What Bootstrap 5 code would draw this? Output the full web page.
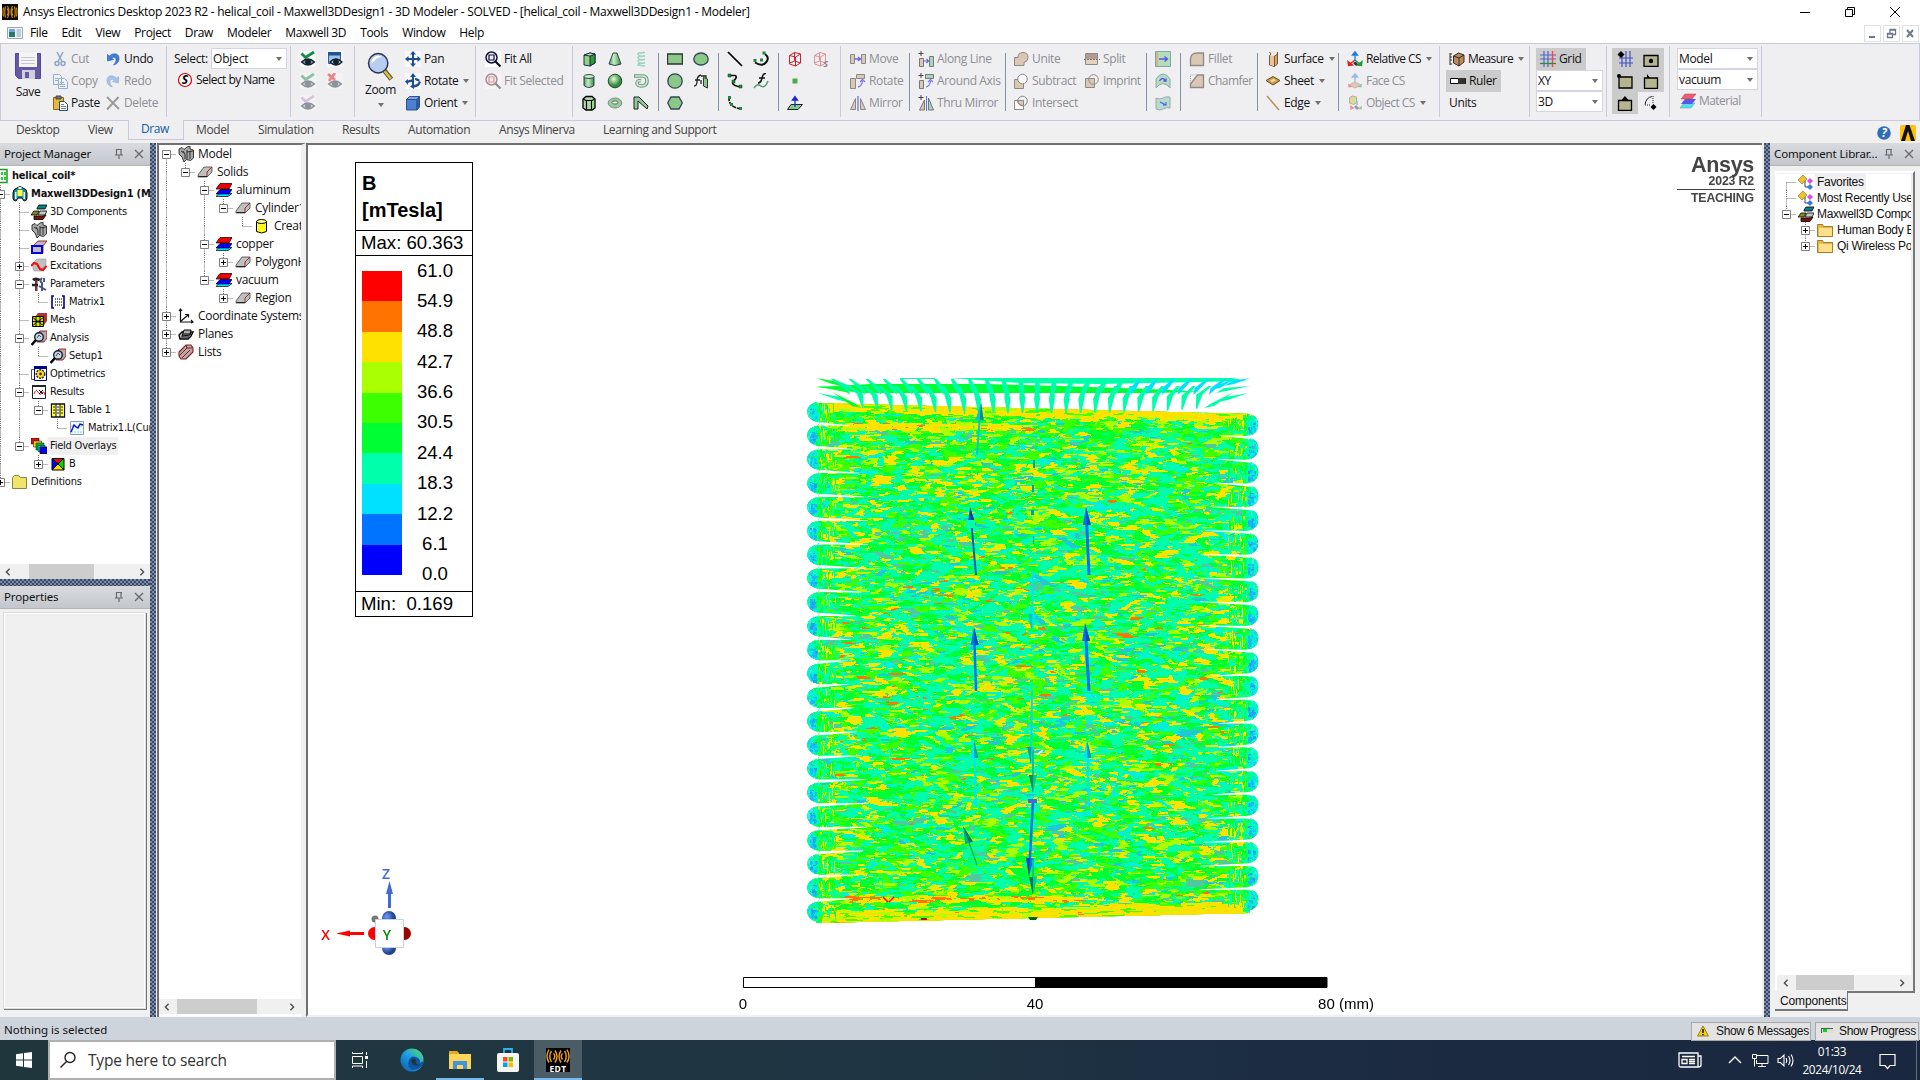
<!DOCTYPE html>
<html lang="en">
<head>
<meta charset="utf-8">
<title>Ansys Electronics Desktop 2023 R2</title>
<link href="https://cdn.jsdelivr.net/npm/bootstrap@5.3.0/dist/css/bootstrap.min.css" rel="stylesheet">
<style>
:root{--seg:"Open Sans","Noto Sans",sans-serif}
html,body{width:1920px;height:1080px;overflow:hidden}
body{font:12px/16px var(--seg);letter-spacing:-.36px;color:#111;background:#f0f0f0;white-space:nowrap}
svg{display:block;flex:none}
.ic{width:16px;height:16px}
.titlebar{height:23px;padding:1px 0 0 2px;background:#fff}
.titlebar .cap{padding-left:5px;color:#000;letter-spacing:-.255px}
.winbtns{gap:33px;padding-right:19px}
.menubar{height:20px;background:#fff;padding-left:7px;color:#000}
.menubar nav{gap:14px;padding-left:7px}
.mdi{gap:2px;padding-right:1px}
.mdi span{width:17px;height:17px;border:1px solid #e2e2e2}
.ribbon{height:78px;border:1px solid #c9c9de;background:#efeff2;padding:4px 0 0 7px;display:grid;grid-template-rows:72px;
 grid-template-columns:40px 53px 64px 3px 121px 3px 61px 3px 45px 73px 3px 94px 3px 83px 3px 57px 3px 57px 3px 59px 3px 66px 3px 93px 3px 69px 69px 3px 31px 3px 74px 3px 78px 3px 98px 3px 87px 3px 74px 3px 60px 3px 89px 3px}
.ribbon>*{min-width:0}
.sepL{width:1.5px;height:71px;margin:-2px auto 0;background:#c9c9dc}
.sepS{width:1px;height:58px;margin:5px auto 0;background:#8593aa}
.o2{padding-left:2px}.o3{padding-left:3px}.o4{padding-left:4px}.o5{padding-left:5px}.o6{padding-left:6px}
.rb{height:22px;display:flex;align-items:center}
.rb>i,.cell>i{width:23px;display:flex;justify-content:center;flex:none}
.tight{letter-spacing:-.55px}
.snug>i{width:22px}
.off{color:#8e8e94}
.faint{opacity:.45}
.cell{display:flex;align-items:center;height:22px}
.cell>i{width:26px}
.w27>.cell>i{width:27px}
.dd::after{content:"";border:3px solid transparent;border-top:4px solid #707070;border-bottom:0;margin-left:5px;width:0;height:0}
.ddz{width:0;height:0;border:3px solid transparent;border-top:4px solid #707070;border-bottom:0;margin-top:5px}
.hl{background:#cbcbcb}
.combo{height:21px;background:#fff;border:1px solid #d5d5e2;display:flex;align-items:center;justify-content:space-between;padding:0 4px 0 1px}
.combo::after{content:"";border:3px solid transparent;border-top:4px solid #707070;border-bottom:0}
.g2{margin-right:2px}
.tabs{height:22px;color:#444;display:grid;grid-template-columns:72px 41px 67px 62px 84px 66px 91px 104px 1fr auto;padding-left:16px;letter-spacing:-.4px}
.tabs>span{height:18px;line-height:18px}
.tabs .act{margin:-1px 12px 0 -1px;height:20px;padding-left:12px;background:#efeff2;border:1px solid #c9c9de;border-top:0;color:#0e5fa8}
.main{height:874px}
.phead{height:23px;flex:none;background:linear-gradient(#d9dbdf,#c3c7cc);border-bottom:1px solid #b4b4b4;padding:0 5px 0 4px;font:11.5px/22px "Noto Sans",sans-serif;letter-spacing:-.14px}
.vs{width:6px;flex:none;background-color:#8a8a88;background-image:radial-gradient(circle at 1px 1px,#2b4a86 1px,transparent 1.3px),radial-gradient(circle at 1px 1px,#2b4a86 1px,transparent 1.3px);background-size:4px 4px;background-position:0 0,2px 2px}
.hs{width:auto;height:7px}
.tree{overflow:hidden}
.tr0{display:flex;height:18px;align-items:center}
.t16 .tr0{height:16px}
.tc{width:19px;height:100%;flex:none}
.tc.icn{display:flex;align-items:center;justify-content:center}
.tl{padding:0 2px;line-height:18px}
.t16 .tl{line-height:16px}
.sel{background:#f0f0f0}
.tah{font:11px/18px "DejaVu Sans Condensed","DejaVu Sans",sans-serif;font-stretch:condensed;letter-spacing:-.22px}
.msf{font:12px/16px "Liberation Sans",sans-serif;letter-spacing:-.3px}
.sbar{height:15px;flex:none;background:#f0f0f0;display:flex;align-items:center;justify-content:space-between;padding:0 5px}
.thumb{height:15px;background:#cdcdcd}
.propbox{margin:4px 5px 9px 4px;border:1px solid #fff;outline:1px solid #dcdcdc;box-shadow:1px 1px 0 1px #777}
.sunk{border-left:2px solid #707070;border-top:2px solid #707070;background:#fff}
.view3d{width:1456px;flex:none;overflow:hidden;border-bottom:2px solid #f0f0f0}
.legend{position:absolute;left:47px;top:17px;width:118px;height:455px;border:1px solid #000;background:#fff;font:18.6px/24px "Liberation Sans",sans-serif;letter-spacing:0;color:#000}
.legend .hd{height:67px;padding:7px 6px;font-weight:bold;font-size:20px;line-height:27px}
.legend .rw{border-top:1px solid #000;height:25px;line-height:23px;padding-left:5px;white-space:pre}
.legend .mid{border-top:1px solid #000;height:336px;padding:15px 0 0 6px}
.legend .bar div{width:40px;height:30.4px}
.legend .num{width:66px;margin-top:-12.5px}
.legend .num div{height:30.4px;text-align:center}
.brand{position:absolute;right:7px;top:6px;width:78px;font:bold 12.3px/13px "Liberation Sans",sans-serif;letter-spacing:-.15px;color:#444;text-align:right}
.brand .big{font:600 21.5px/28px "Liberation Sans",sans-serif;letter-spacing:-.3px}
.brand .ln{border-bottom:1px solid #444;margin-bottom:2px;line-height:14px;padding-bottom:1px;margin-top:-5px}
.brand div{padding-right:1px}
.statusbar{height:23px;background:#cdd4dc;font:11.5px/25px "Noto Sans",sans-serif;letter-spacing:0;padding:1px 0 0 4px}
.sbtn{height:19px;border:1px solid #a9a9a9;background:#e3e3e3;font:12px/17px "Liberation Sans",sans-serif;letter-spacing:-.35px}
.task{height:40px;background:linear-gradient(90deg,#20363d,#1f3543 45%,#1b2a41 75%,#1a2740);color:#fff}
.search{width:288px;background:#fff;border:2px solid #b0b0b0;color:#333;font-size:15.5px;letter-spacing:-.2px}
.tb{width:48px;height:40px;display:flex;align-items:center;justify-content:center}
.run{box-shadow:inset 0 -2px #76b9ed}
.clock{font-size:11.8px;line-height:18px;text-align:center;width:68px}
#selobj{width:76px;margin-right:2px;letter-spacing:-.2px}
#left,#right{width:150px;flex:none}#projTree{height:398px;padding-top:1px}#projTree .tr0{margin-left:-9px}
#sb1{padding:0 4px}#sb1 .thumb{width:65px;margin-right:28px}
#mid{width:149px;flex:none;border-right:5px solid #f0f0f0;margin-left:1px}#sb2{padding-left:4px}#sb2 .thumb{width:80px;margin-right:26px}#mid .sbar{margin-bottom:3px}#modTree .tr0{margin-left:-2px}#modTree .tl{padding-left:3px;letter-spacing:-.3px}
#vs2{margin-left:2px}
#libbox{margin:5px 5px 0 5px;height:822px;border:2px solid #fff;border-right:2px solid #777;border-bottom:2px solid #777;padding:1px 2px 1px 0;background:#f0f0f0}
#libTree .tr0:nth-child(n+4) .tl{padding-left:3px}
#sb3 .thumb{width:58px;margin-right:38px}
#comptab{width:73px;margin:-2px 0 0 5px;height:20px;background:#f0f0f0;border:solid #777;border-width:0 1px 2px 0;padding-left:5px;line-height:20px;position:relative;letter-spacing:-.15px}
#msg{width:120px;padding-left:3px;margin-right:4px}#msg span{padding-left:5px}
#prg{width:104px;margin-right:1px;padding-left:2px}#prg span{padding-left:5px}
#edt{background:#4a5c66;margin-left:2px}
#tray svg:nth-child(1){margin-right:26px}#tray svg:nth-child(2){margin-right:10px}#tray svg:nth-child(3){margin-right:8px}#tray svg:nth-child(4){margin-right:4px}
#tray>svg:nth-child(6){margin:2px 20px 0 13px}#peek{width:4px;height:40px;border-left:1px solid #66707f}
</style>
<script src="https://cdn.jsdelivr.net/npm/bootstrap@5.3.0/dist/js/bootstrap.bundle.min.js"></script>
</head>
<body>
<svg width="0" height="0" class="position-absolute">
<defs>
<linearGradient id="gg" x1="0" x2="1"><stop offset="0" stop-color="#4f9a55"/><stop offset=".4" stop-color="#c8efc4"/><stop offset="1" stop-color="#3a8a44"/></linearGradient>
<radialGradient id="gs" cx=".4" cy=".35"><stop offset="0" stop-color="#e4fbe0"/><stop offset="1" stop-color="#2f8a3a"/></radialGradient>
<radialGradient id="gb" cx=".35" cy=".4"><stop offset="0" stop-color="#6f9cf8"/><stop offset="1" stop-color="#22408c"/></radialGradient>
<linearGradient id="ed" x1="0" y1="1" x2="1" y2="0"><stop offset="0" stop-color="#0c59a4"/><stop offset=".5" stop-color="#1b9de2"/><stop offset="1" stop-color="#5fe06a"/></linearGradient>
</defs>
<symbol id="i-edt" viewBox="0 0 16 16"><path fill="#0b0703" d="M0 0h16v16H0z"/><g fill="none" stroke="#c98a1c" stroke-width="1.200"><path d="M5 4.500q2.500 3.500 0 7M3.500 2.500q-1.500 5.500 0 11M1.500 3.500q-1 4.500 0 9M11 4.500q-2.500 3.500 0 7M12.500 2.500q1.500 5.500 0 11M14.500 3.500q1 4.500 0 9M5.500 2q3 6 0 12M10.500 2q-3 6 0 12"/></g></symbol>
<symbol id="i-doc" viewBox="0 0 16 16"><path fill="#f4f6f8" stroke="#9aa" d="M.5 2.500h15v11H.5z"/><path fill="#2a7a6a" d="M2 4h6v8H2z"/><path fill="#6fa8d8" d="M2 4h6v3H2z"/><path fill="#bcd" d="M9.500 4h4.500v8H9.500z"/></symbol>
<symbol id="i-save" viewBox="0 0 28 28"><path fill="#6558a5" stroke="#544892" d="M1.500 1.500h25v25h-22l-3-3z"/><path fill="#f5f5f8" d="M5 1h18v14H5z"/><path stroke="#c7c7d2" d="M7 5.500h14M7 8.500h14M7 11.500h14"/><path fill="#cfd0da" d="M8 18h13v9H8z"/><path fill="#6558a5" d="M11 20h4v6h-4z"/></symbol>
<symbol id="i-cut" viewBox="0 0 16 16"><g fill="none" stroke="#8fa5c4" stroke-width="1.500"><path d="M5 1l5 9.500M11 1l-5 9.500"/><circle cx="5" cy="12.500" r="2"/><circle cx="11" cy="12.500" r="2"/></g></symbol>
<symbol id="i-copy" viewBox="0 0 16 16"><g fill="#eef3fa" stroke="#98add0"><path d="M1.500 1.500h6l2 2v8h-8zM6.500 5.500h6l3 3v7h-9z"/><path d="M3 5.500h3M3 7.500h3M8 9.500h4M8 11.500h5M8 13.500h5"/></g></symbol>
<symbol id="i-paste" viewBox="0 0 16 16"><path fill="#e6b83c" stroke="#8a6414" d="M1.500 2.500h10v12h-10z"/><path fill="#777" stroke="#444" d="M4 1h5v3H4z"/><path fill="#fff" stroke="#27476e" d="M7.500 6.500h5l3 3v6h-8z"/><path stroke="#5c7fb0" d="M9 9.500h3M9 11.500h5M9 13.500h5"/></symbol>
<symbol id="i-undo" viewBox="0 0 16 16"><path fill="#3f7fd8" stroke="#2156a8" stroke-width=".6" d="M2.500 3.500L2.500 10l6-1.500-2-1.500c2.500-1.600 4.800-.5 4.500 2.500-.3 2-1.500 3.500-2.500 4.500 4-1 6-4 5.500-7.500C13.300 2.300 8.500 1.500 4.500 5z"/></symbol>
<symbol id="i-redo" viewBox="0 0 16 16"><path fill="#a9c1e6" stroke="#8da9d4" stroke-width=".6" d="M13.500 3.500V10l-6-1.500 2-1.500c-2.500-1.600-4.800-.5-4.500 2.500.3 2 1.500 3.500 2.500 4.500-4-1-6-4-5.500-7.500C2.700 2.300 7.500 1.500 11.500 5z"/></symbol>
<symbol id="i-del" viewBox="0 0 16 16"><path d="M2 2l12 12M13.500 2L2 14.500" stroke="#9a9a9a" stroke-width="1.900" fill="none"/></symbol>
<symbol id="i-eye" viewBox="0 0 16 16"><path fill="#f8f8f8" d="M0 0h16v16H0z"/><path fill="none" stroke="#138a4a" stroke-width="2.800" d="M1.500 2.500l4 4 8.500-5.500"/><path fill="#8a9c98" stroke="#123" stroke-width="1.300" d="M1.500 11q6.500-6 13 0q-6.500 6-13 0z"/><circle cx="8" cy="11" r="3" fill="#123"/></symbol>
<symbol id="i-eyep" viewBox="0 0 16 16"><path fill="#f8f8f8" d="M0 0h16v16H0z"/><path fill="none" stroke="#b68cc8" stroke-width="2.600" d="M1.500 2.500l4 4 8.500-5.500"/><path fill="#a0a8a8" stroke="#123" stroke-width="1.300" d="M1.500 11q6.500-6 13 0q-6.500 6-13 0z"/><circle cx="8" cy="11" r="3" fill="#123"/></symbol>
<symbol id="i-eyex" viewBox="0 0 16 16"><path fill="#f8f8f8" d="M0 0h16v16H0z"/><path fill="none" stroke="#e00" stroke-width="2.800" d="M1 1l7 6M8 0L2 8"/><path fill="#a0a8a8" stroke="#123" stroke-width="1.300" d="M1.500 11q6.500-6 13 0q-6.500 6-13 0z"/><circle cx="8" cy="11" r="3" fill="#123"/></symbol>
<symbol id="i-eyew" viewBox="0 0 16 16"><path fill="#f8f8f8" d="M0 0h16v16H0z"/><path fill="#a4bfe2" stroke="#2b64a5" d="M1.500 1.500h12v11h-12z"/><path fill="#1f5492" d="M1 1h13v3.500H1z"/><path fill="#b9c4c4" stroke="#123" stroke-width="1.300" d="M3 11q6-6 12 0q-6 6-12 0z"/><circle cx="9" cy="11" r="2.900" fill="#123"/></symbol>
<symbol id="i-s" viewBox="0 0 16 16"><circle cx="8" cy="8" r="6.500" fill="#fff" stroke="#d00" stroke-width="1.200"/><text x="8" y="12.300" font-size="12" font-weight="bold" text-anchor="middle" fill="#000" letter-spacing="0">S</text></symbol>
<symbol id="i-zoom" viewBox="0 0 30 32"><path d="M18 19l8 10" stroke="#6a5a20" stroke-width="5"/><path d="M18.500 20l7 8.500" stroke="#d9c25c" stroke-width="2.600"/><circle cx="12" cy="12" r="10.300" fill="#b9cdf2" stroke="#2c3350" stroke-width="1.600"/><path d="M5 9q4-7 11-4q-7 1-11 8z" fill="#fff"/></symbol>
<symbol id="i-pan" viewBox="0 0 16 16"><path fill="#f8f8f8" d="M0 0h16v16H0z"/><path fill="#1d4f91" d="M8 0l3 3.500H9V7h3.500V5L16 8l-3.500 3V9H9v3.500h2L8 16l-3-3.500h2V9H3.500v2L0 8l3.500-3v2H7V3.500H5z"/></symbol>
<symbol id="i-rot" viewBox="0 0 16 16"><path fill="#f8f8f8" d="M0 0h16v16H0z"/><path fill="#1d4f91" d="M8 0l3 4H9v8q4-.5 5-4l2 1q-1.500 5-7 5.500V16l-4-2.500L7 12V9q-3 0-4 1v2L0 8.500 3 6v1.500q2-1 4-1V4H5zM10 5q3 0 5 2l-1.500 1.500L10 7z"/></symbol>
<symbol id="i-cube" viewBox="0 0 16 16"><path fill="#4f7fd0" stroke="#2d4f8a" d="M1.500 4.500h10.500v10.500h-10.500z"/><path fill="#7da5e6" stroke="#2d4f8a" d="M1.500 4.500l3-3h10l-2.500 3z"/><path fill="#2f5fb0" stroke="#2d4f8a" d="M12 4.500l2.500-3v10.500l-2.500 3z"/></symbol>
<symbol id="i-fit" viewBox="0 0 16 16"><path fill="#fff" d="M0 0h16v16H0z"/><circle cx="6.500" cy="6.500" r="5.500" fill="#eef" stroke="#113" stroke-width="1.500"/><path fill="none" stroke="#113" stroke-width="1.200" d="M4 4h5v5H4z"/><path d="M10.500 10.500l5 5" stroke="#111" stroke-width="2.200"/></symbol>
<symbol id="i-fitr" viewBox="0 0 16 16"><path fill="#fff" d="M0 0h16v16H0z"/><circle cx="6.500" cy="6.500" r="5.500" fill="#fee" stroke="#513" stroke-width="1.500"/><path fill="none" stroke="#c22" stroke-width="1.200" d="M4 4h5v5H4z"/><path d="M10.500 10.500l5 5" stroke="#111" stroke-width="2.200"/></symbol>
<symbol id="i-box" viewBox="0 0 16 16"><path fill="#8fd08a" stroke="#123" stroke-width=".9" d="M3 4l6-2 5 1v9l-5 3-6-1z"/><path fill="#2f9a3a" stroke="#123" stroke-width=".9" d="M9 5l5-2v9l-5 3z"/><path fill="#c4efbd" stroke="#123" stroke-width=".9" d="M3 4l6-2 5 1-5 2z"/></symbol>
<symbol id="i-frus" viewBox="0 0 16 16"><path fill="url(#gg)" stroke="#234" stroke-width=".9" d="M6 2h4l4 11q-6 3-12 0z"/></symbol>
<symbol id="i-helix" viewBox="0 0 16 16"><g fill="none" stroke="#9ed3bb" stroke-width="1.400"><path d="M12 1.500q-8 0-7 2t7 1.500q-8 0-7 2t7 1.500q-8 0-7 2t7 1.500q-8 0-7 2l7 1"/></g></symbol>
<symbol id="i-cyl" viewBox="0 0 16 16"><path fill="url(#gg)" stroke="#234" stroke-width=".9" d="M3 3.500v9q5 4 10 0v-9"/><ellipse cx="8" cy="3.500" rx="5" ry="2" fill="#c4efbd" stroke="#234" stroke-width=".9"/></symbol>
<symbol id="i-sph" viewBox="0 0 16 16"><circle cx="8" cy="8" r="6.800" fill="url(#gs)" stroke="#254d2b"/></symbol>
<symbol id="i-spiral" viewBox="0 0 16 16"><path fill="none" stroke="#6f9a80" stroke-width="3.600" d="M1 3h9q4 .5 4 5t-5 5q-5 0-5-3t4-2"/><path fill="none" stroke="#cfe6d6" stroke-width="1.600" d="M2 3h8q4 .5 4 5t-5 5q-5 0-5-3t4-2"/></symbol>
<symbol id="i-poly" viewBox="0 0 16 16"><path fill="#a8dba0" stroke="#000" stroke-width="1.300" d="M2 4l3-2.500h6L14 4v9l-3 2H5l-3-2z"/><path d="M2 4l3 1.500h6L14 4M5.500 5.500v9M10.500 5.500v9" fill="none" stroke="#000" stroke-width="1.100"/></symbol>
<symbol id="i-torus" viewBox="0 0 16 16"><ellipse cx="8" cy="8" rx="6.800" ry="5" fill="#9cc9a2" stroke="#6a9a72"/><ellipse cx="8" cy="7.500" rx="3" ry="1.600" fill="#efeff2" stroke="#547a5a"/></symbol>
<symbol id="i-bend" viewBox="0 0 16 16"><path fill="#8fc898" stroke="#222" d="M1 2h5l9 9-1 3-9-8v8H1z"/></symbol>
<symbol id="i-rect" viewBox="0 0 16 16"><path fill="#8bc88a" stroke="#333" stroke-width="1.300" d="M.5 3h15v10H.5z"/></symbol>
<symbol id="i-ell" viewBox="0 0 16 16"><ellipse cx="8" cy="8" rx="7.200" ry="6" fill="#8bc88a" stroke="#345" stroke-width="1.300"/></symbol>
<symbol id="i-circ" viewBox="0 0 16 16"><circle cx="8" cy="8" r="7.200" fill="#8bc88a" stroke="#345" stroke-width="1.300"/></symbol>
<symbol id="i-fsur" viewBox="0 0 16 16"><path fill="#8bc88a" stroke="#333" d="M10.500 4.500l4 1.500v9l-4-2z"/><path d="M1 13q3 0 3-5t4-6M2 7h5M8 7v4M8 3h5v2" fill="none" stroke="#222" stroke-width="1.300"/></symbol>
<symbol id="i-hex" viewBox="0 0 16 16"><path fill="#8bc88a" stroke="#345" stroke-width="1.300" d="M4 2h8l3.300 6-3.300 6H4L.7 8z"/></symbol>
<symbol id="i-line" viewBox="0 0 16 16"><path d="M1 1l14 14" stroke="#000" stroke-width="1.700"/></symbol>
<symbol id="i-arc" viewBox="0 0 16 16"><path d="M12 3q5 4 1 8.500t-11 0" fill="none" stroke="#111" stroke-width="2"/><path fill="#1b8a3a" d="M.5 8h3v3h-3zM7 7.500h3v3H7zM9.500.5h3v3h-3z"/></symbol>
<symbol id="i-spl" viewBox="0 0 16 16"><path d="M2 2.500h6q3 1-1 5t4 6h4" fill="none" stroke="#111" stroke-width="1.700"/><path fill="#1b8a3a" stroke="#041" stroke-width=".5" d="M1 1h3v3H1zM5 7h3v3H5zM12 12h3v3h-3z"/></symbol>
<symbol id="i-feq" viewBox="0 0 16 16"><path d="M5 10q3 0 4-5t4-4.500M6 5h6" fill="none" stroke="#111" stroke-width="1.500"/><path d="M1 15q3-5 7-2t7-5" fill="none" stroke="#5b9a74" stroke-width="1.500"/></symbol>
<symbol id="i-arc2" viewBox="0 0 16 16"><path d="M2 2q-1 10 12 12" fill="none" stroke="#111" stroke-width="1.700" stroke-dasharray="4 1"/><path fill="#1b8a3a" d="M1 1h3v3H1zM3 8h3v3H3zM12 12h3v3h-3z"/></symbol>
<symbol id="i-wbox" viewBox="0 0 16 16"><path fill="none" stroke="#c8202c" d="M2.500 4.500l5-3 6 1.500v9l-5 3-6-2zM2.500 4.500l6 1.500 5-3M8.500 6v9M2.500 12l5-2 6 2M7.500 1.500v8"/></symbol>
<symbol id="i-wboxs" viewBox="0 0 16 16"><path fill="none" stroke="#c8202c" d="M1.500 4.500l5-3 6 1.500v9l-5 3-6-2zM1.500 4.500l6 1.500 5-3M7.500 6v9M1.500 12l5-2 6 2M6.500 1.500v8"/><text x="12.500" y="15.500" font-size="9" font-weight="bold" text-anchor="middle">S</text></symbol>
<symbol id="i-pt" viewBox="0 0 16 16"><path fill="#4cab46" d="M5.500 5.500h5v5h-5z"/></symbol>
<symbol id="i-plane" viewBox="0 0 16 16"><path fill="#7fd08a" stroke="#222" d="M4 9.500h11.500L11 14.500H.5z"/><path d="M8 12V3M5.500 5L8 1.500 10.500 5z" stroke="#22d" fill="#22d" stroke-width="1.300"/></symbol>
<symbol id="i-move" viewBox="0 0 16 16"><g fill="#dcc7b2" stroke="#8a8a8a"><path d="M.5 3.500h4v9h-4zM11.500 3.500h4v9h-4z"/></g><path d="M5 8h5M8 6l2.500 2L8 10" fill="none" stroke="#66e" stroke-width="1.300"/></symbol>
<symbol id="i-rott" viewBox="0 0 16 16"><g fill="#dcc7b2" stroke="#8a8a8a"><path d="M.5 5.500h5v10h-5zM6.500 1.500h8v4h-8z"/></g><path d="M8 14q4-1 4.500-6M10 9l2.500-2.500L15 9" fill="none" stroke="#77e" stroke-width="1.300"/></symbol>
<symbol id="i-mir" viewBox="0 0 16 16"><g fill="#dcc7b2" stroke="#8a8a8a"><path d="M5.500 3.500v11h-5zM10.500 3.500v11h5z"/></g><path d="M8 1v15" stroke="#66e" stroke-width="1.200"/></symbol>
<symbol id="i-al" viewBox="0 0 16 16"><path fill="#dcc7b2" stroke="#777" d="M1.500 7.500h4v8h-4z"/><path fill="#a4d8b6" stroke="#777" d="M11.500 5.500h4v10h-4z"/><path d="M3 0v5M.5 2.500h5" stroke="#444"/><path d="M6 10h4M8.500 8l2 2-2 2" fill="none" stroke="#66e" stroke-width="1.200"/></symbol>
<symbol id="i-aa" viewBox="0 0 16 16"><path fill="#dcc7b2" stroke="#777" d="M1.500 7.500h4v8h-4z"/><path fill="#a4d8b6" stroke="#777" d="M7.500 1.500h8v4h-8z"/><path d="M3 0v5M.5 2.500h5" stroke="#444"/><path d="M8 14q4-1 4.500-6M10 9l2.500-2.500L15 9" fill="none" stroke="#77e" stroke-width="1.200"/></symbol>
<symbol id="i-tm" viewBox="0 0 16 16"><path fill="#dcc7b2" stroke="#777" d="M6.500 5v10h-5z"/><path fill="#a4d8b6" stroke="#777" d="M10.500 3v12h5z"/><path d="M3 0v5M.5 2.500h5" stroke="#444"/><path d="M8.500 1v15" stroke="#66e"/></symbol>
<symbol id="i-uni" viewBox="0 0 16 16"><path fill="#dcc7b2" stroke="#8a8a8a" d="M1.500 14.500v-8h3.500q0-5 5-5t5 5q0 4-4 5v3z"/></symbol>
<symbol id="i-sub" viewBox="0 0 16 16"><path fill="#dcc7b2" stroke="#8a8a8a" d="M1.500 6.500h9v9h-9z"/><circle cx="9.500" cy="6" r="4.800" fill="#f8f8fa" stroke="#8a8a8a"/></symbol>
<symbol id="i-int" viewBox="0 0 16 16"><path fill="#f8f8fa" stroke="#8a8a8a" d="M1.500 5.500h9v9h-9z"/><circle cx="9.500" cy="6" r="4.800" fill="none" stroke="#8a8a8a"/><path fill="#dcc7b2" stroke="#8a8a8a" d="M5 5.500h5.500v5q-5 0-5.500-5z"/></symbol>
<symbol id="i-imp" viewBox="0 0 16 16"><path fill="#dcc7b2" stroke="#8a8a8a" d="M1.500 5.500h9v9h-9z"/><circle cx="9.500" cy="6.500" r="4.800" fill="none" stroke="#8a8a8a"/></symbol>
<symbol id="i-split" viewBox="0 0 16 16"><path fill="#b59a94" d="M2 3h11v5H2z"/><path fill="#e4d2bf" d="M2 8h11v5H2z"/><path fill="none" stroke="#8a8a8a" d="M1.500 2.500h12v11h-12z"/><path d="M0 8.500h16" stroke="#777" stroke-dasharray="2 1"/></symbol>
<symbol id="i-sw1" viewBox="0 0 16 16"><path fill="#b7dcb9" stroke="#7aa" d="M.5.5h15v15H.5z"/><path d="M2 1v14" stroke="#e9a080" stroke-width="1.500"/><path d="M4 8h8M9.500 5.500L12.500 8l-3 2.500" fill="none" stroke="#55e" stroke-width="1.300"/></symbol>
<symbol id="i-sw2" viewBox="0 0 16 16"><path fill="#b7dcb9" stroke="#8ab" d="M1 15V6q3-5 7-5t7 5v9l-3-3q-4-3-8 0z"/><path d="M4.500 8q3-5 6 0M8.500 8h2.500V5.500" fill="none" stroke="#55e" stroke-width="1.300"/></symbol>
<symbol id="i-sw3" viewBox="0 0 16 16"><path fill="#b7dcc9" stroke="#9ab" d="M1 3q4 2 7 0t7-1v11q-4-1-7 1t-7 0z"/><path d="M5 7l6 3M8 10h3V7" fill="none" stroke="#55e" stroke-width="1.100"/></symbol>
<symbol id="i-fil" viewBox="0 0 16 16"><path fill="#dcc7b2" stroke="#8a8a8a" stroke-width="1.300" d="M1.500 14.500V8q0-6 7-6h6v12.500z"/></symbol>
<symbol id="i-cha" viewBox="0 0 16 16"><path fill="#dcc7b2" stroke="#8a8a8a" stroke-width="1.300" d="M1.500 14.500V11l7-9h6v12.500z"/><path d="M1.500 10V2H8" fill="none" stroke="#aaa" stroke-dasharray="1 1"/></symbol>
<symbol id="i-surf" viewBox="0 0 16 16"><path fill="#d2a373" stroke="#7a5632" d="M4.500 1q3 2 0 3.500V14l5 1.500V5q4-1 3-4v12l-3 2.500"/><path fill="#e8c49a" d="M5 4l4 1v10l-4-1z"/></symbol>
<symbol id="i-sheet" viewBox="0 0 16 16"><path fill="#c99a4a" stroke="#6d4c18" d="M1 7.500l7-4 7 4-7 4.500z"/><path fill="#f0d690" d="M5 7.500l4-2 2 2-4 2z"/></symbol>
<symbol id="i-edge" viewBox="0 0 16 16"><path d="M2 1l12 14" stroke="#bd8f63" stroke-width="1.500"/></symbol>
<symbol id="i-cs" viewBox="0 0 16 16"><path d="M8 9V2M5.500 4L8 .8 10.500 4z" fill="#1a7fe0" stroke="#1a7fe0" stroke-width="1.300"/><path d="M8 9l-5 4M1 10.500l.5 4 4-.5z" stroke="#d22" fill="#d22" stroke-width="1.300"/><path d="M8 9l5 4M15 10.500l-.5 4-4-.5z" stroke="#1a9a3a" fill="#1a9a3a" stroke-width="1.300"/><path d="M6 12l2.500-1.500L11 13l-2 2z" fill="#333"/></symbol>
<symbol id="i-csf" viewBox="0 0 16 16"><path d="M8 9V2M5.500 4L8 .8 10.500 4z" fill="#1a7fe0" stroke="#1a7fe0" stroke-width="1.300"/><path d="M2 12l6-3 6 3-6 3z" fill="#c9a070" stroke="#a66"/><path d="M1 10.500l.5 4 4-.5z" fill="#d22"/><path d="M15 10.500l-.5 4-4-.5z" fill="#1a9a3a"/></symbol>
<symbol id="i-cso" viewBox="0 0 16 16"><path fill="#c8c030" stroke="#664" d="M2.500 2.500l3-1.500 4 1v6l-3 1.500-4-1.500z"/><path d="M10 10V6" stroke="#1a7fe0" stroke-width="1.500"/><path d="M3 10l.5 5 4-2z" fill="#d22"/><path d="M15 10.500l-.5 4-4-.5z" fill="#1a9a3a"/><path d="M7 12l2-2 3 3-2 2z" fill="#333"/></symbol>
<symbol id="i-meas" viewBox="0 0 16 16"><path d="M1 2v12M1 3h2M1 6h2M1 9h2M1 13h2" stroke="#333"/><path fill="#bb8a63" stroke="#3a2a1c" d="M4.500 5l5-3 5.500 2v7l-5 4-5.500-3z"/><path d="M4.500 5l5.500 2 5-3M10 7v8" fill="none" stroke="#3a2a1c"/></symbol>
<symbol id="i-ruler" viewBox="0 0 16 16"><path fill="#fff" stroke="#000" d="M.5 5.500h15v5H.5z"/><path d="M8 5h7.500v6H8z" fill="#333"/></symbol>
<symbol id="i-grid" viewBox="0 0 16 16"><g stroke="#5566c8" stroke-width="1.200"><path d="M4 0v16M8 0v16M0 4h16M0 8h16"/></g><path d="M12.500 0v16" stroke="#f44" stroke-width="1.500"/><path d="M0 12.500h16" stroke="#2a8a3a" stroke-width="1.300"/></symbol>
<symbol id="i-sn1" viewBox="0 0 16 16"><g stroke="#4455c0" stroke-width="1.200"><path d="M5 2v14M9 0v16M13 0v16M2 7h14M2 12h14"/></g><path d="M4 0l3.500 3.500L4 7 .5 3.500z"/></symbol>
<symbol id="i-sn2" viewBox="0 0 16 16"><path fill="#b5b48e" stroke="#000" stroke-width="1.300" d="M1 4.500h14v11H1z"/><circle cx="8" cy="10" r="2.200"/></symbol>
<symbol id="i-sn3" viewBox="0 0 16 16"><path fill="#b5b48e" stroke="#000" stroke-width="1.300" d="M2 4h13v11H2z"/><circle cx="2" cy="3" r="2"/></symbol>
<symbol id="i-sn4" viewBox="0 0 16 16"><path fill="#b5b48e" stroke="#000" stroke-width="1.300" d="M1.500 5h13v10.500h-13z"/><path d="M4 1l3 4H4z"/></symbol>
<symbol id="i-sn5" viewBox="0 0 16 16"><path fill="#b5b48e" stroke="#000" stroke-width="1.300" d="M1.500 5.500h13v10h-13z"/><path d="M4.500 5L8 1l3.500 4z"/></symbol>
<symbol id="i-sn6" viewBox="0 0 16 16"><path d="M9 1.500q-6 1-7 8" stroke="#222" fill="none"/><path d="M10 1v8M2 10h6" stroke="#222" fill="none" stroke-dasharray="1 1"/><path d="M10.500 9l3 3-3 3-3-3z"/></symbol>
<symbol id="i-mat" viewBox="0 0 16 16"><path fill="#55dfee" stroke="#789" stroke-width=".5" d="M0 15l4-5h11l-4 5z"/><path fill="#5858e8" d="M1 11l4-5h11l-4 5z"/><path fill="#ee6070" stroke="#a44" stroke-width=".5" d="M1 6l4-5h11l-4 5z"/></symbol>
<symbol id="i-help" viewBox="0 0 16 16"><circle cx="8" cy="8" r="6.800" fill="#2f6db5"/><text x="8" y="12" font-size="11.500" font-weight="bold" text-anchor="middle" fill="#fff">?</text></symbol>
<symbol id="i-ans" viewBox="0 0 16 16"><rect width="16" height="16" rx="2" fill="#ffc20e"/><path fill="#111" d="M1 16L6 0h3.500L15 16h-4L8 6l-3 10z"/></symbol>
<symbol id="i-min" viewBox="0 0 12 12"><path d="M1 6.500h10" stroke="#000"/></symbol>
<symbol id="i-res" viewBox="0 0 12 12"><path d="M1.500 3.500h7v7h-7zM3.500 3V1.500h7v7H9" fill="none" stroke="#000"/></symbol>
<symbol id="i-x" viewBox="0 0 12 12"><path d="M1 1l10 10M11 1L1 11" stroke="#000"/></symbol>
<symbol id="i-pin" viewBox="0 0 12 12"><path d="M3.500 1v6M2 7h8M6 7v4M3 1.500h6M8 1v6" stroke="#6a6a6a" stroke-width="1.200" fill="none"/></symbol>
<symbol id="i-px" viewBox="0 0 12 12"><path d="M2 2l8 8M10 2l-8 8" stroke="#6a6a6a" stroke-width="1.300"/></symbol>
<symbol id="i-lt" viewBox="0 0 8 10"><path d="M6 1L2 5l4 4" fill="none" stroke="#505050" stroke-width="1.800"/></symbol>
<symbol id="i-gt" viewBox="0 0 8 10"><path d="M2 1l4 4-4 4" fill="none" stroke="#505050" stroke-width="1.800"/></symbol>
<symbol id="t-prj" viewBox="0 0 16 16"><path fill="#fff" stroke="#1c9a2a" stroke-width="1.500" d="M1 1.500h13v13H1z"/><path fill="#1fd32a" d="M8 4h2v3H8zM11 4h2v3h-2zM8 9h2v3H8zM11 9h2v3h-2z"/></symbol>
<symbol id="t-mx" viewBox="0 0 16 16"><path fill="#1a8c96" stroke="#000" d="M1 12V7q0-4 4-5l3-1.500L11 2q4 1 4 5v5q0 3-3 3l-2-3H6l-2 3q-3 0-3-3z"/><path fill="#ff4" d="M5.500 4h5v6h-5z"/><path fill="#fff" d="M3 6h1.500v7H3zM11.500 6H13v7h-1.500zM6.500 1h3v2h-3z"/></symbol>
<symbol id="t-3dc" viewBox="0 0 16 16"><path fill="#0a8080" stroke="#000" stroke-width=".8" d="M6 4l2-3h8l-2 4H6z"/><path fill="#8a8a1c" stroke="#000" stroke-width=".8" d="M0 11l3-4h5l-2 4z"/><path fill="#c8c8c8" stroke="#000" stroke-width=".8" d="M7 11l2-4h7l-2 4z"/><path fill="#7a1010" stroke="#000" stroke-width=".8" d="M3 15.500V12h9l3-1-3 4.500z"/></symbol>
<symbol id="t-mod" viewBox="0 0 16 16"><path fill="#a8a8a8" stroke="#222" stroke-width=".9" d="M1 3l3-1.500 2 2L9 1l3-1v3l3.500 1v8l-3 2.500-4-1L6 16l-2-5L1 8z"/><path d="M5 5q3 2 2 8M9 4v9M12 5v8M3 5l3 2M9 6l6-1" stroke="#222" fill="none" stroke-width=".9"/></symbol>
<symbol id="t-bnd" viewBox="0 0 16 16"><path fill="#c0b8b8" stroke="#800" stroke-width=".8" d="M3 5l4-4h9l-4 5v7z"/><path fill="#c0c0c0" stroke="#00e" stroke-width="2" d="M1 6h10v7H1z"/></symbol>
<symbol id="t-exc" viewBox="0 0 16 16"><path fill="#c0c0c0" stroke="#999" stroke-width=".6" d="M2 11V5l4-4h9v8l-3 4H3z"/><path d="M0 8l3-3 3 1 3 5 3 1 3.500-4" fill="none" stroke="#e11" stroke-width="2.200"/></symbol>
<symbol id="t-par" viewBox="0 0 16 16"><path d="M1 3q3-3 9 0L8 5H3z" fill="#222"/><path d="M4 4h2.500v11H4z" fill="#833"/><path d="M11 2q-3 3 0 5v8M13 2v4M8 10l7 4" stroke="#458" stroke-width="2" fill="none"/><path d="M1 9h6" stroke="#222" stroke-width="2.400"/></symbol>
<symbol id="t-mat" viewBox="0 0 16 16"><path d="M4 2H2v12h2M12 2h2v12h-2" fill="none" stroke="#008" stroke-width="1.600"/><path d="M5 5h7M5 8h7M5 11h7" stroke="#444" stroke-dasharray="1 1" stroke-width="1.300"/></symbol>
<symbol id="t-msh" viewBox="0 0 16 16"><path fill="#a33" d="M4 5l3-4h9v8l-3 4z"/><path fill="#dd0" stroke="#000" d="M1.500 4.500h11v10h-11z"/><path d="M1 9.500h12M5 4v11M9 4v11M1 5l12 9M13 5L1 14" stroke="#000" stroke-width=".9"/></symbol>
<symbol id="t-ana" viewBox="0 0 16 16"><path fill="#c0a8a8" stroke="#800" stroke-width=".8" d="M6 4l3-3h7v7l-3 4H6z"/><circle cx="8" cy="7" r="4.300" fill="#bde" stroke="#123" stroke-width="1.400"/><path d="M5 10l-4.500 5" stroke="#000" stroke-width="2.500"/><path d="M6 8l2-3 2 2" stroke="#a22" fill="none"/></symbol>
<symbol id="t-opt" viewBox="0 0 16 16"><path fill="#fff" stroke="#555" d="M.5 3.500h10v10H.5z"/><path fill="#fff" stroke="#008" d="M3.500 1.500h12v13h-12z"/><path fill="#008" d="M3 0h13v3H3z"/><circle cx="9.500" cy="8" r="4.200" fill="#fd2" stroke="#222" stroke-dasharray="2 1" stroke-width="1.500"/><circle cx="9.500" cy="8" r="1.400" fill="#333"/></symbol>
<symbol id="t-res" viewBox="0 0 16 16"><path fill="#fff" stroke="#222" d="M1.500 1.500h13v13h-13z"/><path d="M1 2h14" stroke="#222" stroke-width="2"/><path d="M3 10q2-6 4-2t4 1 3 2" fill="none" stroke="#d22"/><path d="M8 6l4 4M12 6l-4 4" stroke="#111"/></symbol>
<symbol id="t-tab" viewBox="0 0 16 16"><path fill="#ffe" stroke="#111" stroke-width="1.300" d="M1.500 2h13v13h-13z"/><path fill="#ff3" d="M2 3h4v11H2zM10 3h4v11h-4z"/><path d="M6 2v13M10 2v13" stroke="#111"/><path d="M3 5h10M3 8h10M3 11h10" stroke="#222" stroke-dasharray="2 2"/></symbol>
<symbol id="t-crv" viewBox="0 0 16 16"><path fill="#f2fbff" stroke="#99a" d="M1.500 1.500h13v13h-13z"/><path d="M2 6h12M2 12h12" stroke="#5ee" stroke-dasharray="2 1"/><path d="M2 12l3-7 2 2 2 1 2-4 3 1" fill="none" stroke="#11c" stroke-width="1.400"/></symbol>
<symbol id="t-fld" viewBox="0 0 16 16"><path fill="#d11" stroke="#000" stroke-width=".5" d="M0 0h8v6H0z"/><path fill="#fd0" stroke="#000" stroke-width=".5" d="M2.500 3h8v6h-8z"/><path fill="#0b3" stroke="#000" stroke-width=".5" d="M5 5h8v7H5z"/><path fill="#0cf" stroke="#000" stroke-width=".5" d="M7 7.500h7v6H7z"/><path fill="#00f" stroke="#000" stroke-width=".8" d="M9 9h7v6.500H9z"/></symbol>
<symbol id="t-b" viewBox="0 0 16 16"><path fill="#f00" d="M2 2h12L8 8z"/><path fill="#0d0" d="M14 2v12L8 8z"/><path fill="#fd0" d="M2 14L8 8l6 6z"/><path fill="#00f" d="M2 2l6 6-6 6z"/><path fill="none" stroke="#000" d="M2 2.500h12v11.500H2zM2 2l12 12M14 2L2 14"/></symbol>
<symbol id="t-dir" viewBox="0 0 16 16"><path fill="#f2e36b" stroke="#8a8444" d="M.5 14.500v-11l2-2h4l2 2h6v11z"/></symbol>
<symbol id="t-dir2" viewBox="0 0 16 16"><path fill="#e8b84a" stroke="#a47a22" d="M.5 14.500v-12h5l1 2h9v10z"/><path fill="#ffe08a" d="M2 6h13v8H2z"/></symbol>
<symbol id="t-sol" viewBox="0 0 16 16"><path fill="#c0c0c0" stroke="#444" stroke-width=".8" d="M1 11l6-8h8v5l-5 5H1z"/><path d="M10 13V8l5-5" fill="none" stroke="#903030"/><path d="M1.500 12.500H10" stroke="#222"/></symbol>
<symbol id="t-lay" viewBox="0 0 16 16"><path fill="#00e5ff" stroke="#000" stroke-width=".7" d="M0 14.500l3-3h13l-4 3z"/><path fill="#00f" stroke="#000" stroke-width=".7" d="M0 12L4 7.500h12L13 12z"/><path fill="#e00" stroke="#000" stroke-width=".7" d="M0 7L4 1.500h12L13 7z"/></symbol>
<symbol id="t-yc" viewBox="0 0 16 16"><path fill="#ff2" stroke="#000" d="M2.500 3.500v10q5 3 10 0v-10z"/><ellipse cx="7.500" cy="3.500" rx="5" ry="2" fill="#ff8" stroke="#000"/></symbol>
<symbol id="t-cs" viewBox="0 0 16 16"><path d="M2.500 1v13h13M1 3l1.500-2L4 3M13 12l2 2-2 1M3 13l7-6M7 6.500h3.500v3" fill="none" stroke="#111" stroke-width="1.200"/></symbol>
<symbol id="t-pl" viewBox="0 0 16 16"><path fill="#ccc" stroke="#000" stroke-width="1.400" d="M1 9l3-3h11l-2 4-3 3H2z"/><path fill="#aaa" stroke="#000" d="M4 10l2-6h7l-1 5z"/><path d="M5 8h8M3 11h8" stroke="#000"/></symbol>
<symbol id="t-ls" viewBox="0 0 16 16"><path fill="#b9a9a9" stroke="#802020" stroke-width="1.100" d="M1 8l7-7h5l2 3v4l-7 7H3l-2-3z"/><path d="M1 12l8-8 5 0M4 14l8-8M8 1l1 3" fill="none" stroke="#802020"/></symbol>
<symbol id="t-fav" viewBox="0 0 16 16"><path fill="#f0c030" stroke="#a47a10" stroke-width=".7" d="M5 1l4 4-5 5-4-4z"/><path fill="#e04ae0" d="M12 4l3 3-3 3-3-3z"/><path fill="#3a7ae0" d="M12 10l3 3-3 3-3-3z"/><path d="M7 7v6h3" stroke="#446" fill="none"/></symbol>
<symbol id="i-warn" viewBox="0 0 16 16"><path fill="#f7d117" stroke="#9a8200" d="M8 3l5.500 10h-11z"/><path d="M8 6v4M8 11v1.300" stroke="#111" stroke-width="1.500"/></symbol>
<symbol id="i-prog" viewBox="0 0 16 16"><path fill="#ddd" d="M3 5h12v5H3z"/><path d="M3 5.500h12M3.500 5v5" stroke="#555"/><path fill="#0d0" d="M5 6h4v3H5z"/></symbol>
</svg>

<header class="titlebar d-flex justify-content-between align-items-center">
 <div class="d-flex align-items-center"><i data-ic="i-edt"></i><span class="cap">Ansys Electronics Desktop 2023 R2 - helical_coil - Maxwell3DDesign1 - 3D Modeler - SOLVED - [helical_coil - Maxwell3DDesign1 - Modeler]</span></div>
 <div class="winbtns d-flex"><i data-ic="i-min" data-s="12"></i><i data-ic="i-res" data-s="12"></i><i data-ic="i-x" data-s="12"></i></div>
</header>
<div class="menubar d-flex align-items-center justify-content-between">
 <div class="d-flex align-items-center"><i data-ic="i-doc"></i><nav class="d-flex"><span>File</span><span>Edit</span><span>View</span><span>Project</span><span>Draw</span><span>Modeler</span><span>Maxwell 3D</span><span>Tools</span><span>Window</span><span>Help</span></nav></div>
 <div class="mdi d-flex"><span><svg width="15" height="15"><path d="M4 11h6" stroke="#6b7b8d" stroke-width="2"/></svg></span><span><svg width="15" height="15"><path d="M3.500 7.500h5v4h-5zM6 7V3.500h5.500v5H9M3.500 8h5M6 4h5.500" fill="none" stroke="#6b7b8d" stroke-width="1.300"/></svg></span><span><svg width="15" height="15"><path d="M4 4l6 7M10 4l-6 7" stroke="#6b7b8d" stroke-width="2"/></svg></span></div>
</div>

<section class="ribbon">
 <div class="d-flex flex-column align-items-center pt-1"><i data-ic="i-save" data-s="28"></i><span class="mt-1">Save</span></div>
 <div><div class="rb off"><i data-ic="i-cut"></i>Cut</div><div class="rb off"><i data-ic="i-copy"></i>Copy</div><div class="rb"><i data-ic="i-paste"></i>Paste</div></div>
 <div><div class="rb"><i data-ic="i-undo"></i>Undo</div><div class="rb off"><i data-ic="i-redo"></i>Redo</div><div class="rb off"><i data-ic="i-del"></i>Delete</div></div>
 <div class="sepL"></div>
 <div class="o6"><div class="d-flex align-items-center"><span class="flex-grow-1">Select:</span><div class="combo" id="selobj">Object</div></div><div class="rb tight snug"><i data-ic="i-s"></i>Select by Name</div></div>
 <div class="sepL"></div>
 <div class="o2 w27"><div class="cell"><i data-ic="i-eye"></i><i data-ic="i-eyew"></i></div><div class="cell"><i class="faint" data-ic="i-eye"></i><i class="faint" data-ic="i-eyex"></i></div><div class="cell"><i class="faint" data-ic="i-eyep"></i></div></div>
 <div class="sepL"></div>
 <div class="d-flex flex-column align-items-center pt-1 o4"><i data-ic="i-zoom" data-s="30"></i><span>Zoom</span><span class="ddz"></span></div>
 <div><div class="rb"><i data-ic="i-pan"></i>Pan</div><div class="rb dd"><i data-ic="i-rot"></i>Rotate</div><div class="rb dd"><i data-ic="i-cube"></i>Orient</div></div>
 <div class="sepL"></div>
 <div class="o4"><div class="rb"><i data-ic="i-fit"></i>Fit All</div><div class="rb off"><i class="faint" data-ic="i-fitr"></i>Fit Selected</div></div>
 <div class="sepL"></div>
 <div class="o2"><div class="cell"><i data-ic="i-box"></i><i data-ic="i-frus"></i><i data-ic="i-helix"></i></div><div class="cell"><i data-ic="i-cyl"></i><i data-ic="i-sph"></i><i data-ic="i-spiral"></i></div><div class="cell"><i data-ic="i-poly"></i><i data-ic="i-torus"></i><i data-ic="i-bend"></i></div></div>
 <div class="sepS"></div>
 <div class="o2"><div class="cell"><i data-ic="i-rect"></i><i data-ic="i-ell"></i></div><div class="cell"><i data-ic="i-circ"></i><i data-ic="i-fsur"></i></div><div class="cell"><i data-ic="i-hex"></i></div></div>
 <div class="sepS"></div>
 <div class="o2"><div class="cell"><i data-ic="i-line"></i><i data-ic="i-arc"></i></div><div class="cell"><i data-ic="i-spl"></i><i data-ic="i-feq"></i></div><div class="cell"><i data-ic="i-arc2"></i></div></div>
 <div class="sepS"></div>
 <div class="o2"><div class="cell"><i data-ic="i-wbox"></i><i class="faint" data-ic="i-wboxs"></i></div><div class="cell"><i data-ic="i-pt"></i></div><div class="cell"><i data-ic="i-plane"></i></div></div>
 <div class="sepL"></div>
 <div class="o4 off"><div class="rb"><i data-ic="i-move"></i>Move</div><div class="rb"><i data-ic="i-rott"></i>Rotate</div><div class="rb"><i data-ic="i-mir"></i>Mirror</div></div>
 <div class="sepS"></div>
 <div class="o3 off"><div class="rb"><i data-ic="i-al"></i>Along Line</div><div class="rb"><i data-ic="i-aa"></i>Around Axis</div><div class="rb"><i data-ic="i-tm"></i>Thru Mirror</div></div>
 <div class="sepS"></div>
 <div class="o3 off"><div class="rb snug"><i data-ic="i-uni"></i>Unite</div><div class="rb snug"><i data-ic="i-sub"></i>Subtract</div><div class="rb snug"><i data-ic="i-int"></i>Intersect</div></div>
 <div class="o4 off"><div class="rb"><i data-ic="i-split"></i>Split</div><div class="rb tight"><i data-ic="i-imp"></i>Imprint</div></div>
 <div class="sepS"></div>
 <div class="o2"><div class="cell"><i data-ic="i-sw1"></i></div><div class="cell"><i data-ic="i-sw2"></i></div><div class="cell"><i data-ic="i-sw3"></i></div></div>
 <div class="sepS"></div>
 <div class="o3 off"><div class="rb"><i data-ic="i-fil"></i>Fillet</div><div class="rb tight"><i data-ic="i-cha"></i>Chamfer</div></div>
 <div class="sepS"></div>
 <div class="o3"><div class="rb dd snug"><i data-ic="i-surf"></i>Surface</div><div class="rb dd snug"><i data-ic="i-sheet"></i>Sheet</div><div class="rb dd snug"><i data-ic="i-edge"></i>Edge</div></div>
 <div class="sepS"></div>
 <div class="o3 tight"><div class="rb dd"><i data-ic="i-cs"></i>Relative CS</div><div class="rb off"><i class="faint" data-ic="i-csf"></i>Face CS</div><div class="rb off dd"><i class="faint" data-ic="i-cso"></i>Object CS</div></div>
 <div class="sepL"></div>
 <div class="o5"><div class="rb dd tight snug"><i data-ic="i-meas"></i>Measure</div><div class="d-flex"><div class="rb hl pe-1"><i data-ic="i-ruler"></i>Ruler</div></div><div class="rb o3">Units</div></div>
 <div class="sepL"></div>
 <div class="o5"><div class="d-flex"><div class="rb hl pe-1"><i data-ic="i-grid"></i>Grid</div></div><div class="combo g2">XY</div><div class="combo g2">3D</div></div>
 <div class="sepL"></div>
 <div class="o4"><div class="cell"><i class="hl h-100 align-items-center" data-ic="i-sn1"></i><i class="hl h-100 align-items-center" data-ic="i-sn2"></i></div><div class="cell"><i class="hl h-100 align-items-center" data-ic="i-sn3"></i><i class="hl h-100 align-items-center" data-ic="i-sn4"></i></div><div class="cell"><i class="hl h-100 align-items-center" data-ic="i-sn5"></i><i data-ic="i-sn6"></i></div></div>
 <div class="sepL"></div>
 <div class="o6"><div class="combo g2">Model</div><div class="combo g2">vacuum</div><div class="rb off tight snug"><i data-ic="i-mat"></i>Material</div></div>
 <div class="sepL"></div>
</section>

<nav class="tabs"><span>Desktop</span><span>View</span><span class="act">Draw</span><span>Model</span><span>Simulation</span><span>Results</span><span>Automation</span><span>Ansys Minerva</span><span>Learning and Support</span><div class="d-flex gap-2 pt-1 h-75 pe-1"><i data-ic="i-help"></i><i data-ic="i-ans"></i></div></nav>

<main class="main d-flex">
 <aside class="d-flex flex-column" id="left">
  <div class="phead d-flex justify-content-between"><span>Project Manager</span><span class="d-flex gap-2 align-items-center"><i data-ic="i-pin" data-s="12"></i><i data-ic="i-px" data-s="12"></i></span></div>
  <div class="tree tah bg-white" id="projTree"></div>
  <div class="sbar" id="sb1"><i data-ic="i-lt" data-s="8"></i><div class="thumb"></div><i data-ic="i-gt" data-s="8"></i></div>
  <div class="vs hs"></div>
  <div class="phead d-flex justify-content-between"><span>Properties</span><span class="d-flex gap-2 align-items-center"><i data-ic="i-pin" data-s="12"></i><i data-ic="i-px" data-s="12"></i></span></div>
  <div class="propbox flex-grow-1"></div>
 </aside>
 <div class="vs"></div>
 <section class="d-flex flex-column sunk" id="mid">
  <div class="tree flex-grow-1" id="modTree"></div>
  <div class="sbar" id="sb2"><i data-ic="i-lt" data-s="8"></i><div class="thumb"></div><i data-ic="i-gt" data-s="8"></i></div>
 </section>
 <section class="view3d sunk position-relative">
  <canvas id="field" width="1454" height="870" class="d-block"></canvas>
  <svg class="position-absolute top-0 start-0" width="1454" height="870" viewBox="308 145 1454 870" font-family="Liberation Sans" letter-spacing="0">
   <path d="M743.500 977.500H1327v10H743.500z" fill="#fff" stroke="#000"/><path d="M1035 977h292v11H1035z"/>
   <g font-size="15" text-anchor="middle"><text x="743" y="1009">0</text><text x="1035" y="1009">40</text><text x="1346" y="1009">80 (mm)</text></g>
   <circle cx="389" cy="918" r="7" fill="url(#gb)"/><circle cx="389" cy="948" r="7" fill="url(#gb)"/><circle cx="374.500" cy="933.500" r="6.500" fill="#f00"/><circle cx="404.500" cy="933.500" r="6.500" fill="#a00000"/><circle cx="375" cy="919" r="3.500" fill="#777"/>
   <path d="M375.500 919.500h28v28h-28z" fill="#fff" stroke="#c4d2e0"/>
   <path d="M389.500 881l3.500 13h-2v14h-3V894h-2z" fill="#4169d8"/><path d="M336 933.500l14-3v1.500h14v3h-14v1.500z" fill="#f00"/>
   <g font-family="Open Sans" font-weight="600" font-size="14" text-anchor="middle"><text x="386" y="879" fill="#4169e1">Z</text><text x="325.500" y="940" fill="#f00">X</text><text x="387" y="940" fill="#008a00">Y</text></g>
  </svg>
  <div class="legend"><div class="hd"><div>B</div><div>[mTesla]</div></div><div class="rw">Max: 60.363</div><div class="mid d-flex"><div class="bar" id="bar"></div><div class="num" id="num"></div></div><div class="rw">Min:&nbsp; 0.169</div></div>
  <div class="brand"><div class="big">Ansys</div><div class="ln">2023 R2</div><div>TEACHING</div></div>
 </section>
 <div class="vs" id="vs2"></div>
 <aside class="d-flex flex-column" id="right">
  <div class="phead d-flex justify-content-between"><span>Component Librar...</span><span class="d-flex gap-2 align-items-center"><i data-ic="i-pin" data-s="12"></i><i data-ic="i-px" data-s="12"></i></span></div>
  <div id="libbox" class="d-flex flex-column"><div class="tree t16 msf flex-grow-1 bg-white" id="libTree"></div><div class="sbar" id="sb3"><i data-ic="i-lt" data-s="8"></i><div class="thumb"></div><i data-ic="i-gt" data-s="8"></i></div></div>
  <div class="msf" id="comptab">Components</div>
 </aside>
</main>

<footer class="statusbar d-flex justify-content-between align-items-center"><span>Nothing is selected</span><div class="d-flex pt-1"><div class="sbtn d-flex align-items-center" id="msg"><i data-ic="i-warn"></i><span>Show 6 Messages</span></div><div class="sbtn d-flex align-items-center" id="prg"><i data-ic="i-prog"></i><span>Show Progress</span></div></div></footer>

<div class="task d-flex justify-content-between">
 <div class="d-flex">
  <div class="tb"><svg width="16" height="16"><path fill="#fff" d="M0 2.300l7-1v6.200H0zM8 1.100L16 0v7.500H8zM0 8.500h7v6.200l-7-1zM8 8.500h8V16l-8-1.100z"/></svg></div>
  <div class="search d-flex align-items-center"><svg width="38" height="20"><circle cx="20" cy="7.500" r="5" fill="none" stroke="#222" stroke-width="1.400"/><path d="M16.500 11.500l-6 6" stroke="#222" stroke-width="1.400"/></svg>Type here to search</div>
  <div class="tb"><svg width="17" height="18" fill="none" stroke="#fff"><path d="M.5 5.500h10v7H.5zM.5 1v1.500h10V1M.5 17v-2h10v2M14.500 1v3M14.500 10v7"/><path fill="#fff" stroke="none" d="M13 5h3v3h-3z"/></svg></div>
  <div class="tb ms-1"><svg width="24" height="24"><circle cx="12" cy="12" r="11.500" fill="url(#ed)"/><path d="M9 12q2-5 7-3t4 6q3-1 3.500-3v3q-4 8-12 6.500-5-3-2.500-9.500z" fill="#0e56a5"/><path d="M11 13q1 4 5 4.500t6-1.500q-2 2-5 0-2-1-1-3 .5-2-2-2.500T11 13z" fill="#20363d"/></svg></div>
  <div class="tb run"><svg width="24" height="20"><path fill="#e5a722" d="M1 1h8l2 2v3H1z"/><path fill="#fcd45c" d="M1 4h22v15H1z"/><path fill="#3f94dc" d="M5 19v-8h14v8h-4v-4H9v4z"/></svg></div>
  <div class="tb"><svg width="24" height="26"><path d="M8 6V2h8v4" fill="none" stroke="#29b6f0" stroke-width="1.800"/><rect x="1" y="6" width="22" height="19" rx="2" fill="#f4f4f4"/><path fill="#f25022" d="M7 10h4.500v4.500H7z"/><path fill="#7fba00" d="M12.500 10H17v4.500h-4.500z"/><path fill="#00a4ef" d="M7 15.500h4.500V20H7z"/><path fill="#ffb900" d="M12.500 15.500H17V20h-4.500z"/></svg></div>
  <div class="tb run" id="edt"><svg width="24" height="24"><path d="M0 0h24v24H0z"/><g fill="none" stroke="#f0a020" stroke-width="1.400"><path d="M7.500 5.500q2.500 2.500 0 6M9 2.500q4 6 0 12M5.500 3q-3.500 5 0 11M3 1.500q-4 7 0 13M16.500 5.500q-2.500 2.500 0 6M15 2.500q-4 6 0 12M18.500 3q3.500 5 0 11M21 1.500q4 7 0 13"/></g><text x="12" y="23.500" font-size="8.500" font-weight="bold" fill="#fff" text-anchor="middle" letter-spacing=".3">EDT</text></svg></div>
 </div>
 <div class="d-flex align-items-center" id="tray">
  <svg width="24" height="16" fill="none" stroke="#fff" stroke-width="1.300"><path d="M1 1h19v14H3q-2 0-2-2zM20 4h3v9q0 2-3 2M4 4.500h13M4 7.500h5v4H4zM11 7.500h6M11 9.500h6M11 11.500h6"/></svg>
  <svg width="14" height="8" fill="none" stroke="#fff" stroke-width="1.400"><path d="M1 7l6-6 6 6"/></svg>
  <svg width="17" height="15" fill="none" stroke="#fff"><path d="M5 2.500h11v8H4.500V7M10 10.500v3M6 13.500h8M.5 1.500h4v4h-4zM2.500 5.500v8"/></svg>
  <svg width="17" height="15" fill="none" stroke="#fff" stroke-width="1.100"><path d="M1 5.500h2.500L7 2v11L3.500 9.500H1zM9 5q1.500 2.500 0 5M11.500 3q3 4.500 0 9M14 1.500q4 6 0 12"/></svg>
  <div class="clock">01:33<br>2024/10/24</div>
  <svg width="17" height="17" fill="none" stroke="#fff" stroke-width="1.200"><path d="M1 1.500h15v11h-5l-2.500 3-2.500-3H1z"/></svg>
  <div id="peek"></div>
 </div>
</div>
<script>
document.querySelectorAll('[data-ic]').forEach(function(e){
  var s=e.dataset.s||16;
  e.innerHTML='<svg width="'+s+'" height="'+s+'"><use href="#'+e.dataset.ic+'"/></svg>';
});
// Tree connector cell: line up / line down / stub to the right / expander box
function cell(ch,h){
  var m=Math.floor(h/2)+.5,d='';
  if('|TPMLpm'.indexOf(ch)>=0)d+='M9.500 0V'+m;
  if('|TPMFf'.indexOf(ch)>=0)d+='M9.500 '+m+'V'+h;
  if(ch!=='|'&&ch!==' ')d+='M9.500 '+m+'H19';
  var s='<svg class="tc" width="19" height="'+h+'"><path d="'+d+'" stroke="#777" stroke-dasharray="1 1" fill="none"/>';
  if('PMpmF'.indexOf(ch)>=0){
    s+='<path d="M5.500 '+(m-4)+'h8v8h-8z" fill="#fff" stroke="#808080"/><path d="M7 '+m+'h5'+('Pp'.indexOf(ch)>=0?'M9.500 '+(m-2.5)+'v5':'')+'" stroke="#000"/>';
  }
  return s+'</svg>';
}
function tree(id,h,rows){
  document.getElementById(id).innerHTML=rows.map(function(r){
    return '<div class="tr0">'+r[0].split('').map(function(c){return cell(c,h)}).join('')+
      '<span class="tc icn"><svg class="ic"><use href="#'+r[1]+'"/></svg></span><span class="tl '+(r[3]||'')+'">'+r[2]+'</span></div>';
  }).join('');
}
tree('projTree',18,[['','t-prj','helical_coil*','fw-bold'],['M','t-mx','Maxwell3DDesign1 (Magnetostatic)','fw-bold'],['|T','t-3dc','3D Components'],['|T','t-mod','Model'],['|T','t-bnd','Boundaries'],['|P','t-exc','Excitations'],['|M','t-par','Parameters'],['||L','t-mat','Matrix1'],['|T','t-msh','Mesh'],['|M','t-ana','Analysis'],['||L','t-ana','Setup1'],['|T','t-opt','Optimetrics'],['|M','t-res','Results'],['||m','t-tab','L Table 1'],['|| L','t-crv','Matrix1.L(Current)'],['|m','t-fld','Field Overlays','sel'],['| p','t-b','B'],['p','t-dir','Definitions']]);
tree('modTree',18,[['F','t-mod','Model'],['|m','t-sol','Solids'],['| M','t-lay','aluminum'],['| |m','t-sol','Cylinder1'],['| | L','t-yc','CreateCylinder'],['| M','t-lay','copper'],['| |p','t-sol','PolygonHelix'],['| m','t-lay','vacuum'],['|  p','t-sol','Region'],['P','t-cs','Coordinate Systems'],['P','t-pl','Planes'],['p','t-ls','Lists']]);
tree('libTree',16,[['f','t-fav','Favorites','sel'],['T','t-fav','Most Recently Used'],['m','t-3dc','Maxwell3D Components'],[' P','t-dir2','Human Body Exposure'],[' p','t-dir2','Qi Wireless Power']]);
document.getElementById('bar').innerHTML=['#ff0000','#ff7300','#ffe100','#aaff00','#3cff00','#00ff32','#00ffaa','#00e1ff','#0073ff','#0000ff'].map(function(c){return '<div style="background:'+c+'"></div>'}).join('');
document.getElementById('num').innerHTML=['61.0','54.9','48.8','42.7','36.6','30.5','24.4','18.3','12.2','6.1','0.0'].map(function(t){return '<div>'+t+'</div>'}).join('');

// Flux density vectors over the coil
var g=document.getElementById('field').getContext('2d'),seed=7;
function R(){seed=(seed*1664525+1013904223)>>>0;return seed/4294967296}
function pick(a){var t=0,i;for(i=1;i<a.length;i+=2)t+=a[i];t*=R();for(i=1;i<a.length;i+=2){t-=a[i];if(t<0)return a[i-1]}return a[0]}
function poly(c,p){g.fillStyle=c;g.beginPath();for(var i=0;i<p.length;i+=2)g.lineTo(p[i],p[i+1]);g.closePath();g.fill()}
g.translate(-308,-145);
var T='#00ffaa',G='#00ff32',L='#3cff00',Y='#aaff00',A='#ffe100',O='#ff7300',C='#00f0dc',B='#1ec8d7',K='#50c8a0';
function topY(x){return 403+(x-812)*.026} function botY(x){return 923-(x-812)*.024}
g.save();
var i,x,y,d;
g.beginPath();g.moveTo(815,403);g.lineTo(1250,414);
for(i=0;i<21;i++){y=425+23.75*i;g.lineTo(1250,y-10);g.bezierCurveTo(1261,y-9,1261,y+8,1250,y+10)}
g.lineTo(1250,913);g.lineTo(815,923);
for(i=21;i>=0;i--){y=412+23.8*i;g.lineTo(820,y+10);g.bezierCurveTo(804,y+9,803,y-8,818,y-10)}
g.closePath();g.clip();
g.fillStyle='#00ff78';g.fillRect(800,395,470,535);
function blob(x,y,w,h,c){g.fillStyle=c;x|=0;y|=0;var s=(R()-.5)*5;
  for(var k=0;k<h;k++){var e=w*(.5+.5*R());g.fillRect((x+(w-e)*R()+s*k)|0,y+k,Math.max(1,e|0),1)}}
for(i=0;i<30000;i++){
  x=800+R()*458;y=400+R()*525;
  var f=Math.min(y-400,925-y),mid=Math.min(1,f/120),big=R()<.26;
  var c=pick([T,15+21*mid,G,25-6*mid,L,21-9*mid,Y,12-2*mid,A,12+2*mid,O,.3+1.500*mid*(y>560&&y<760?1:.1),C,1.5+3*mid,B,1+2*mid,K,1+3*mid]);
  if(c===O)blob(x,y,6+R()*16,1+R()*2,c);else if(big)blob(x,y,6+R()*15,3+R()*7,c);else blob(x,y,4+R()*15,1+R()*2.2,c);
}
// Warm edges of the first and last turns
for(i=0;i<1000;i++){x=812+R()*440;blob(x,topY(x)+R()*R()*8,8+R()*22,1+R()*2,pick([A,12,Y,2,L,2]));x=812+R()*440;blob(x,botY(x)-1-R()*R()*12,8+R()*22,1+R()*2,pick([A,12,Y,3,L,2,O,.3]))}
for(i=0;i<110;i++){x=840+R()*180;blob(x,423+R()*7,6+R()*18,1+R()*2,pick([A,6,O,1.2,Y,3]));x=840+R()*230;blob(x,896+R()*5,6+R()*18,1+R()*2,pick([A,6,O,3,Y,2]))}
// Rounded ends of every turn
function cap(cx,cy,s){
  for(var k=0;k<240;k++){var a=R()*14,b=(R()-.5)*21,c=a<6?pick(['#3cf0e6',3,C,4,T,6,'#28c8f0',2]):a<11?pick([T,8,C,2,G,3]):pick([T,4,G,5,L,2,A,.5]);
    g.fillStyle=c;g.fillRect(cx+s*a|0,cy+b|0,2,2+R()*2)}
  for(k=0;k<26;k++){g.fillStyle=pick(['#1eb4ff',3,'#1ea0e6',1,C,2]);g.fillRect(cx+s*(3+R()*6)|0,cy+(R()-.3)*10|0,1+R()*2,1+R()*3)}
  for(k=0;k<24;k++){g.fillStyle=pick([A,2,G,3,L,2,T,3]);g.fillRect(cx+s*(13+R()*16)|0,cy-8+R()*12|0,1,3+R()*6)}
}
for(i=0;i<22;i++)cap(807,412+23.8*i,1);
for(i=0;i<21;i++)cap(1257,425+23.75*i,-1);
// White gaps between neighbouring turns, tapering towards the middle
for(i=1;i<22;i++){y=400+23.8*i;d=858-10*Math.cos(i*.55);var u=i<11?1:-1;poly('#fff',[800,y-3,822,y-1.300,d,y+u*1.500-.1,d,y+u*1.500+.5,822,y+1.700,800,y+3.500])}
for(i=0;i<20;i++){y=437+23.75*i;d=1209+10*Math.cos(i*.5);u=i<10?-1:1;poly('#fff',[1262,y-3.500,1246,y-1.100,d,y+u*1.500-.3,d,y+u*1.500+.3,1246,y+1.500,1262,y+3.500])}
g.restore();
// Fringe vectors above the coil
poly(T,[950,378,1232,378,1248,381,1200,382,1100,384,1020,383]);
g.fillStyle=T;g.fillRect(900,378,35,1);
poly(G,[816,387,870,384,985,384,1060,386,1150,389,1205,392,1150,393,860,393,840,390]);
for(i=0;i<24;i++){
  var bx=863+i*14.5,q=(bx-1034)/171,by=413-Math.abs(q)*q*q*5,tx=bx+q*14;
  poly(T,[tx-1.500,386,tx+1.500,386,bx+q*3+3,by-14,bx+.7,by,bx-.7,by,bx+q*3-3,by-14]);
  var ux=bx+q*30;poly(q>.45?'#00e1ff':T,[ux-1.500,379,ux+1.500,379,bx+q*18+3,388,bx+q*13,395,bx+q*18-3,388]);
}
// Outermost vectors, seen almost edge-on
[[816,378,842,386],[830,378,856,390],[816,386,850,393],[818,393,848,402],[832,392,862,408]].forEach(function(v,n){
  [1,-1].forEach(function(s){
    var X=function(a){return s>0?a:2066-a},col=s>0?(n%2?T:G):(n<2?'#00e1ff':T);
    poly(col,[X(v[0]),v[1],X(v[2]-8),v[3]-5,X(v[2]),v[3],X(v[2]-10),v[3]-2]);
  });
});
// Larger vectors inside the bore
function arrow(x0,y0,x1,y1,c,c2,w){
  var a=Math.atan2(y1-y0,x1-x0),X=Math.cos(a),Z=Math.sin(a),hx=x1-X*18,hy=y1-Z*18;
  g.strokeStyle=c;g.lineWidth=w;g.beginPath();g.moveTo(x0,y0);g.lineTo(hx,hy);g.stroke();
  poly(c,[x1,y1,hx-Z*4,hy+X*4,hx+Z*4,hy-X*4]);poly(c2,[x1,y1,hx,hy,hx-Z*4,hy+X*4]);
}
arrow(1089,575,1086,507,'#0073ff','#0050b4',3);arrow(1089,691,1085,623,'#0073ff','#0050b4',3);
arrow(976,575,970,507,'#005ad2','#003c96',2);arrow(976,691,974,627,'#0073ff','#0050b4',2.500);
g.fillStyle=T;g.fillRect(966,520,9,8);
arrow(1089,807,1087,740,'#00e1ff','#00a0aa',2);arrow(976,807,974,740,'#00e1ff','#00a0aa',2);
arrow(977,455,981,402,'#00c8d2','#008c96',2);arrow(977,865,963,826,'#00b482','#007850',1.500);
arrow(1033,800,1029,876,'#0073ff','#0046aa',2.500);arrow(1032,690,1031,765,'#00dce6','#00a0a0',2);
g.fillStyle='#00a0a0';g.fillRect(1033,460,2,8);g.fillRect(1032,485,2,7);g.fillRect(1031,510,3,5);g.fillRect(1033,536,1,8);
arrow(1033,572,1032,632,'#00e1ff','#00c8b4',2);
arrow(1033,750,1033,793,'#00c896','#008c5a',2);arrow(1033,860,1033,895,'#00c896','#007850',2);
g.fillStyle='#4169e1';g.fillRect(1028,799,9,4);g.strokeStyle='#e6f0ff';g.lineWidth=2;g.beginPath();g.moveTo(1037,755);g.lineTo(1043,750);g.stroke();
poly('#006400',[1028,917,1038,917,1036,920,1030,920]);
g.strokeStyle='#f00';g.lineWidth=1.500;g.beginPath();g.moveTo(883,897);g.lineTo(888,902);g.moveTo(894,897);g.lineTo(889,902);g.stroke();
g.fillStyle='#c80000';g.fillRect(921,918,6,2);
</script>
</body>
</html>
